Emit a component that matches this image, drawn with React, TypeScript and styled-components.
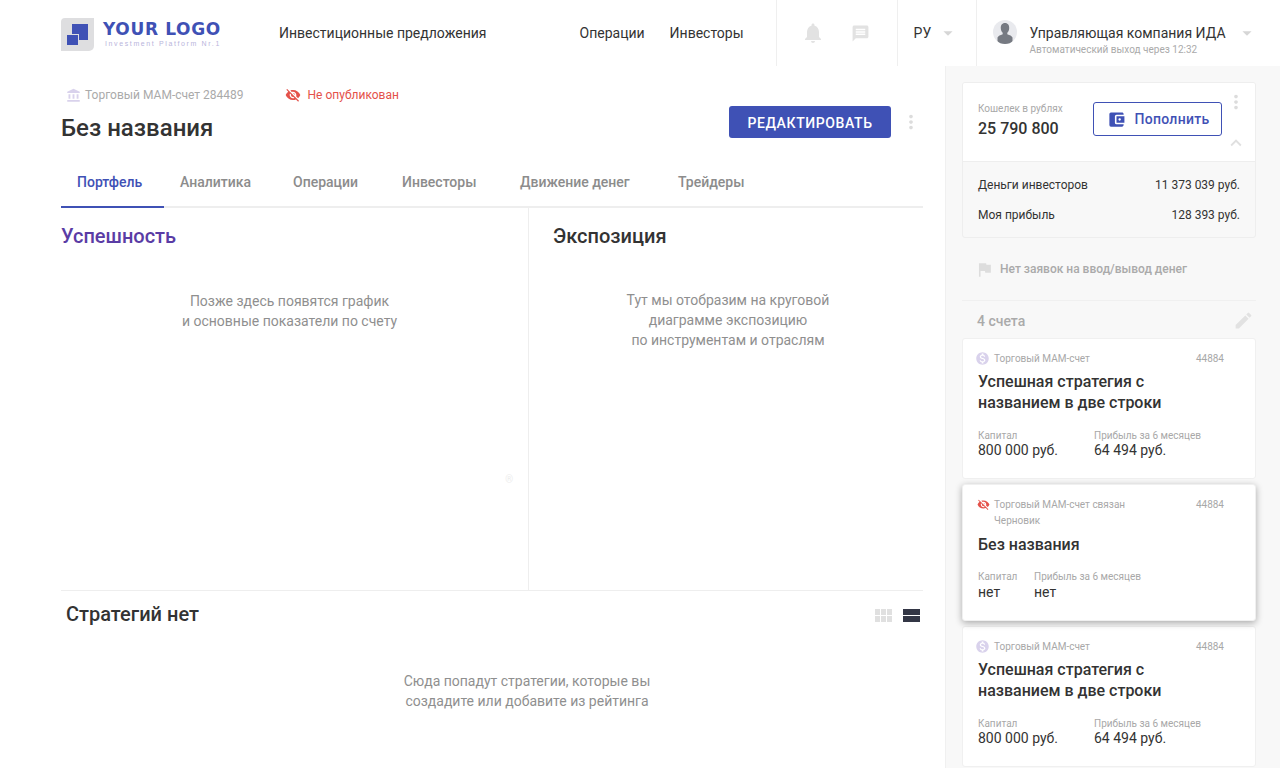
import styled, { createGlobalStyle } from 'styled-components';
import {
  MdAccountBalance,
  MdAccountBalanceWallet,
  MdArrowDropDown,
  MdEdit,
  MdExpandLess,
  MdFlag,
  MdMessage,
  MdMonetizationOn,
  MdMoreVert,
  MdNotifications,
  MdVisibilityOff,
} from 'react-icons/md';

const GlobalStyle = createGlobalStyle`
  html, body {
    margin: 0;
    padding: 0;
    background: #fff;
    font-family: Roboto, "Liberation Sans", sans-serif;
    color: #333;
  }
  * { box-sizing: border-box; }
`;

const tabs = ['Портфель', 'Аналитика', 'Операции', 'Инвесторы', 'Движение денег', 'Трейдеры'];

const accounts = [
  {
    type: 'Торговый МАМ-счет',
    title: 'Успешная стратегия с названием в две строки',
    capital: '800 000 руб.',
    profit: '64 494 руб.',
  },
  {
    type: 'Торговый МАМ-счет связан',
    note: 'Черновик',
    title: 'Без названия',
    capital: 'нет',
    profit: 'нет',
    active: true,
  },
  {
    type: 'Торговый МАМ-счет',
    title: 'Успешная стратегия с названием в две строки',
    capital: '800 000 руб.',
    profit: '64 494 руб.',
  },
];

const App = () => {
  return (
    <Page>
      <GlobalStyle />
      <Header>
        <Logo>
          <svg width="33" height="33" viewBox="0 0 33 33">
            <path d="M4 0h29v28a5 5 0 0 1-5 5H0V4a4 4 0 0 1 4-4z" fill="#dedee0" />
            <rect x="11" y="6" width="16" height="16" fill="#3f51b5" />
            <rect x="5.500" y="16.500" width="12" height="11" fill="#3f51b5" stroke="#dedee0" />
          </svg>
          <LogoText>
            <LogoName>YOUR LOGO</LogoName>
            <LogoSub>Investment Platform Nr.1</LogoSub>
          </LogoText>
        </Logo>
        <OffersLink>Инвестиционные предложения</OffersLink>
        <NavLink $left={93}>Операции</NavLink>
        <NavLink $left={25}>Инвесторы</NavLink>
        <IconsCell>
          <MdNotifications size={24} color="#e2e2e2" />
          <MdMessage size={19} color="#e2e2e2" />
        </IconsCell>
        <LangCell>
          РУ
          <MdArrowDropDown size={22} color="#d6d6d6" />
        </LangCell>
        <UserCell>
          <Avatar>
            <svg width="24" height="24" viewBox="0 0 24 24">
              <path
                d="M12 3c3 0 4.400 2.300 4.200 5.200-.1 2-.9 3.500-1.900 4.500v1.500c2.500.8 4.400 1.700 5.200 3.300V24H4.500v-6.500c.8-1.600 2.700-2.500 5.200-3.300v-1.500c-1-1-1.800-2.500-1.900-4.500C7.600 5.300 9 3 12 3z"
                fill="#767a82"
              />
            </svg>
          </Avatar>
          <UserInfo>
            <UserName>Управляющая компания ИДА</UserName>
            <UserHint>Автоматический выход через 12:32</UserHint>
          </UserInfo>
          <UserCaret>
            <MdArrowDropDown size={22} color="#d6d6d6" />
          </UserCaret>
        </UserCell>
      </Header>

      <Body>
        <Main>
          <TitleRow>
            <div>
              <MetaRow>
                <MetaItem>
                  <MdAccountBalance size={15} color="#d9d2ec" />
                  Торговый МАМ-счет 284489
                </MetaItem>
                <Unpublished>
                  <MdVisibilityOff size={16} color="#e4514a" />
                  Не опубликован
                </Unpublished>
              </MetaRow>
              <PageTitle>Без названия</PageTitle>
            </div>
            <TitleActions>
              <EditButton>РЕДАКТИРОВАТЬ</EditButton>
              <MdMoreVert size={22} color="#dcdcdc" />
            </TitleActions>
          </TitleRow>

          <Tabs>
            {tabs.map((tab, i) => (
              <Tab key={tab} $active={i === 0}>
                {tab}
              </Tab>
            ))}
          </Tabs>

          <Panels>
            <SuccessPanel>
              <SuccessTitle>Успешность</SuccessTitle>
              <SuccessText>
                Позже здесь появятся график
                <br />и основные показатели по счету
              </SuccessText>
              <FaintMark>®</FaintMark>
            </SuccessPanel>
            <ExposurePanel>
              <PanelTitle>Экспозиция</PanelTitle>
              <ExposureText>
                Тут мы отобразим на круговой
                <br />
                диаграмме экспозицию
                <br />
                по инструментам и отраслям
              </ExposureText>
            </ExposurePanel>
          </Panels>

          <StrategiesRow>
            <StrategiesTitle>Стратегий нет</StrategiesTitle>
            <ViewSwitch>
              <svg width="17" height="13" viewBox="0 0 17 13" fill="#e0e0e0">
                <rect width="5" height="6" />
                <rect x="6" width="5" height="6" />
                <rect x="12" width="5" height="6" />
                <rect y="7" width="5" height="6" />
                <rect x="6" y="7" width="5" height="6" />
                <rect x="12" y="7" width="5" height="6" />
              </svg>
              <svg width="17" height="13" viewBox="0 0 17 13" fill="#333645">
                <rect width="17" height="6" />
                <rect y="7" width="17" height="6" />
              </svg>
            </ViewSwitch>
          </StrategiesRow>
          <StrategiesText>
            Сюда попадут стратегии, которые вы
            <br />
            создадите или добавите из рейтинга
          </StrategiesText>
        </Main>

        <Sidebar>
          <WalletCard>
            <WalletTop>
              <div>
                <SmallLabel>Кошелек в рублях</SmallLabel>
                <WalletSum>25 790 800</WalletSum>
              </div>
              <TopUpButton>
                <MdAccountBalanceWallet size={19} color="#3f51b5" />
                Пополнить
              </TopUpButton>
              <WalletKebab>
                <MdMoreVert size={22} color="#dcdcdc" />
              </WalletKebab>
              <WalletChevron>
                <MdExpandLess size={22} color="#e0e0e0" />
              </WalletChevron>
            </WalletTop>
            <WalletBottom>
              <WalletRow>
                <span>Деньги инвесторов</span>
                <span>11 373 039 руб.</span>
              </WalletRow>
              <WalletRow>
                <span>Моя прибыль</span>
                <span>128 393 руб.</span>
              </WalletRow>
            </WalletBottom>
          </WalletCard>

          <Requests>
            <MdFlag size={19} color="#dddddd" />
            Нет заявок на ввод/вывод денег
          </Requests>

          <AccountsHead>
            4 счета
            <MdEdit size={21} color="#e2e2e2" />
          </AccountsHead>

          <AccountList>
            {accounts.map((account, i) => (
              <AccountCard key={i} $active={account.active}>
                <AccountHead>
                  <AccountType>
                    <TypeIcon>
                      {account.active ? (
                        <MdVisibilityOff size={13} color="#e4514a" />
                      ) : (
                        <MdMonetizationOn size={15} color="#d9d2ec" />
                      )}
                    </TypeIcon>
                    {account.type}
                  </AccountType>
                  <AccountNumber>44884</AccountNumber>
                </AccountHead>
                {account.note && <AccountNote>{account.note}</AccountNote>}
                <AccountTitle $active={account.active}>{account.title}</AccountTitle>
                <AccountStats $active={account.active}>
                  <div>
                    <SmallLabel>Капитал</SmallLabel>
                    <StatValue $active={account.active}>{account.capital}</StatValue>
                  </div>
                  <div>
                    <SmallLabel>Прибыль за 6 месяцев</SmallLabel>
                    <StatValue $active={account.active}>{account.profit}</StatValue>
                  </div>
                </AccountStats>
              </AccountCard>
            ))}
          </AccountList>
        </Sidebar>
      </Body>
    </Page>
  );
};
export default App;

const Page = styled.div`
  width: 1280px;
  height: 768px;
  overflow: hidden;
  display: flex;
  flex-direction: column;
`;

const Header = styled.header`
  height: 66px;
  flex: none;
  display: flex;
  align-items: stretch;
  padding-left: 61px;
  font-size: 14px;
  color: #333;
`;

const Logo = styled.div`
  width: 218px;
  display: flex;
  align-items: center;
  gap: 9px;
  padding-top: 3px;
`;

const LogoText = styled.div`
  display: flex;
  flex-direction: column;
  gap: 2px;
  margin-top: -2px;
`;

const LogoName = styled.div`
  font-family: 'DejaVu Sans', sans-serif;
  font-size: 17px;
  line-height: 18px;
  font-weight: 700;
  letter-spacing: 0.65px;
  color: #3f51b5;
  white-space: nowrap;
`;

const LogoSub = styled.div`
  font-family: 'Liberation Sans', sans-serif;
  font-size: 7px;
  line-height: 8px;
  letter-spacing: 1.62px;
  padding-left: 2px;
  color: #b9b5dc;
  white-space: nowrap;
`;

const OffersLink = styled.div`
  display: flex;
  align-items: center;
  white-space: nowrap;
`;

const NavLink = styled.div<{ $left: number }>`
  display: flex;
  align-items: center;
  margin-left: ${(p) => p.$left}px;
  white-space: nowrap;
`;

const IconsCell = styled.div`
  margin-left: 32px;
  width: 122px;
  border-left: 1px solid #efefef;
  border-right: 1px solid #efefef;
  display: flex;
  align-items: center;
  gap: 26px;
  padding-left: 24px;
`;

const LangCell = styled.div`
  width: 79px;
  border-right: 1px solid #efefef;
  display: flex;
  align-items: center;
  gap: 6px;
  padding-left: 16px;
`;

const UserCell = styled.div`
  flex: 1;
  display: flex;
  align-items: center;
  padding-left: 16px;
`;

const UserCaret = styled.span`
  line-height: 0;
  margin-left: 8px;
`;

const Avatar = styled.div`
  width: 24px;
  height: 24px;
  border-radius: 50%;
  background: #e9eaee;
  overflow: hidden;
  margin-right: 13px;
  margin-top: -2px;
  flex: none;
`;

const UserInfo = styled.div`
  margin-top: 14px;
  margin-right: 2px;
`;

const UserName = styled.div`
  font-size: 14px;
  line-height: 20px;
  white-space: nowrap;
`;

const UserHint = styled.div`
  font-size: 10px;
  line-height: 14px;
  color: #aaa;
  white-space: nowrap;
`;

const Body = styled.div`
  flex: 1;
  display: flex;
  min-height: 0;
`;

const Main = styled.main`
  width: 946px;
  flex: none;
  padding: 0 22px 0 61px;
  border-right: 1px solid #f0f0f0;
`;

const TitleRow = styled.div`
  height: 87px;
  display: flex;
  justify-content: space-between;
  align-items: flex-start;
`;

const MetaRow = styled.div`
  display: flex;
  align-items: center;
  gap: 41px;
  padding: 21px 0 0 5px;
  height: 37px;
`;

const MetaItem = styled.div`
  display: flex;
  align-items: center;
  gap: 4px;
  font-size: 12px;
  color: #aaa;
`;

const Unpublished = styled(MetaItem)`
  gap: 7px;
  color: #e4514a;
`;

const PageTitle = styled.h1`
  margin: 0;
  padding-top: 9px;
  font-size: 24px;
  line-height: 32px;
  font-weight: 500;
  color: #333;
`;

const TitleActions = styled.div`
  display: flex;
  align-items: center;
  gap: 9px;
  padding-top: 40px;
  margin-right: 1px;
`;

const EditButton = styled.button`
  width: 162px;
  height: 32px;
  border: none;
  border-radius: 3px;
  padding: 2px 0 0;
  background: #3f51b5;
  color: #fff;
  font-family: Roboto, sans-serif;
  font-size: 14px;
  font-weight: 500;
  letter-spacing: 0.6px;
`;

const Tabs = styled.nav`
  height: 55px;
  display: grid;
  grid-template-columns: 103px 113px 109px 118px 158px 1fr;
  border-bottom: 2px solid #eee;
`;

const Tab = styled.div<{ $active?: boolean }>`
  padding: 19px 0 0 16px;
  margin-bottom: -2px;
  font-size: 14px;
  line-height: 20px;
  font-weight: 500;
  white-space: nowrap;
  color: ${(p) => (p.$active ? '#3f51b5' : '#8c8c8c')};
  border-bottom: 2px solid ${(p) => (p.$active ? '#3f51b5' : 'transparent')};
`;

const Panels = styled.section`
  height: 383px;
  display: grid;
  grid-template-columns: 468px 1fr;
  border-bottom: 1px solid #eee;
`;

const SuccessPanel = styled.div`
  position: relative;
  border-right: 1px solid #eee;
`;

const ExposurePanel = styled.div`
  padding-left: 24px;
`;

const PanelTitle = styled.h2`
  margin: 0;
  padding-top: 14px;
  font-size: 20px;
  line-height: 28px;
  font-weight: 500;
  color: #333;
`;

const SuccessTitle = styled(PanelTitle)`
  color: #5a3ca5;
`;

const EmptyText = styled.p`
  margin: 0;
  font-size: 14px;
  line-height: 20px;
  text-align: center;
  color: #8f8f8f;
`;

const SuccessText = styled(EmptyText)`
  padding: 41px 10px 0 0;
`;

const ExposureText = styled(EmptyText)`
  padding: 40px 20px 0 0;
`;

const FaintMark = styled.span`
  position: absolute;
  right: 15px;
  top: 266px;
  font-size: 10px;
  color: #ededed;
`;

const StrategiesRow = styled.div`
  height: 48px;
  display: flex;
  align-items: center;
  justify-content: space-between;
  padding: 0 3px 0 5px;
`;

const StrategiesTitle = styled.h2`
  margin: 0 0 2px;
  font-size: 20px;
  font-weight: 500;
  color: #333;
`;

const ViewSwitch = styled.div`
  display: flex;
  gap: 11px;
`;

const StrategiesText = styled(EmptyText)`
  padding: 32px 0 0 70px;
`;

const Sidebar = styled.aside`
  flex: 1;
  background: #f8f8f8;
  padding: 16px 24px 0 16px;
`;

const WalletCard = styled.div`
  height: 156px;
  border: 1px solid #eee;
  border-radius: 3px;
  overflow: hidden;
`;

const WalletTop = styled.div`
  position: relative;
  height: 79px;
  background: #fff;
  border-bottom: 1px solid #eee;
  padding: 19px 0 0 15px;
  display: flex;
  align-items: flex-start;
`;

const WalletSum = styled.div`
  font-size: 16px;
  line-height: 22px;
  font-weight: 500;
  margin-top: 2px;
  color: #333;
  white-space: nowrap;
`;

const SmallLabel = styled.div`
  font-size: 10px;
  line-height: 14px;
  color: #a8a8a8;
  white-space: nowrap;
`;

const TopUpButton = styled.button`
  position: absolute;
  left: 130px;
  top: 19px;
  width: 129px;
  height: 34px;
  border: 1px solid #3f51b5;
  border-radius: 3px;
  padding: 0 0 0 2px;
  background: #fff;
  color: #3f51b5;
  font-family: Roboto, sans-serif;
  font-size: 14px;
  font-weight: 500;
  letter-spacing: 0.3px;
  display: flex;
  align-items: center;
  justify-content: center;
  gap: 8px;
`;

const WalletKebab = styled.span`
  position: absolute;
  right: 8px;
  top: 8px;
  line-height: 0;
`;

const WalletChevron = styled.span`
  position: absolute;
  right: 8px;
  top: 49px;
  line-height: 0;
`;

const WalletBottom = styled.div`
  padding: 8px 15px 0;
`;

const WalletRow = styled.div`
  height: 30px;
  display: flex;
  align-items: center;
  justify-content: space-between;
  font-size: 12px;
  color: #333;
`;

const Requests = styled.div`
  height: 63px;
  display: flex;
  align-items: center;
  gap: 6px;
  padding-left: 13px;
  border-bottom: 1px solid #f0f0f0;
  font-size: 12px;
  font-weight: 500;
  color: #aaa;
`;

const AccountsHead = styled.div`
  height: 37px;
  display: flex;
  align-items: center;
  justify-content: space-between;
  padding: 2px 2px 0 15px;
  font-size: 14px;
  font-weight: 500;
  color: #aaa;
`;

const AccountList = styled.div`
  display: flex;
  flex-direction: column;
  gap: 5px;
`;

const AccountCard = styled.article<{ $active?: boolean }>`
  height: ${(p) => (p.$active ? '137px' : '141px')};
  flex: none;
  background: #fff;
  border: 1px solid #f0f0f0;
  border-radius: 3px;
  padding: 12px 16px 0 12px;
  ${(p) => p.$active && 'box-shadow: 0 2px 7px rgba(0, 0, 0, 0.32); position: relative;'}
`;

const AccountHead = styled.div`
  display: flex;
  justify-content: space-between;
  align-items: center;
  height: 15px;
  padding-right: 15px;
`;

const AccountType = styled.div`
  display: flex;
  align-items: center;
  gap: 4px;
  font-size: 10px;
  color: #a8a8a8;
  white-space: nowrap;
`;

const TypeIcon = styled.span`
  width: 15px;
  display: flex;
  justify-content: flex-end;
  line-height: 0;
`;

const AccountNumber = styled.div`
  font-size: 10px;
  color: #a8a8a8;
`;

const AccountNote = styled.div`
  padding: 1px 0 0 19px;
  font-size: 10px;
  line-height: 15px;
  color: #a8a8a8;
`;

const AccountTitle = styled.h3<{ $active?: boolean }>`
  margin: ${(p) => (p.$active ? '6px' : '5px')} 0 0 3px;
  width: 230px;
  font-size: 16px;
  line-height: 21px;
  font-weight: 500;
  color: #333;
`;

const AccountStats = styled.div<{ $active?: boolean }>`
  margin: ${(p) => (p.$active ? '15px' : '16px')} 0 0 3px;
  display: grid;
  grid-template-columns: ${(p) => (p.$active ? '56px' : '116px')} 1fr;
`;

const StatValue = styled.div<{ $active?: boolean }>`
  margin-top: ${(p) => (p.$active ? '0' : '-1px')};
  font-size: 14px;
  line-height: 16px;
  color: #333;
  white-space: nowrap;
`;
